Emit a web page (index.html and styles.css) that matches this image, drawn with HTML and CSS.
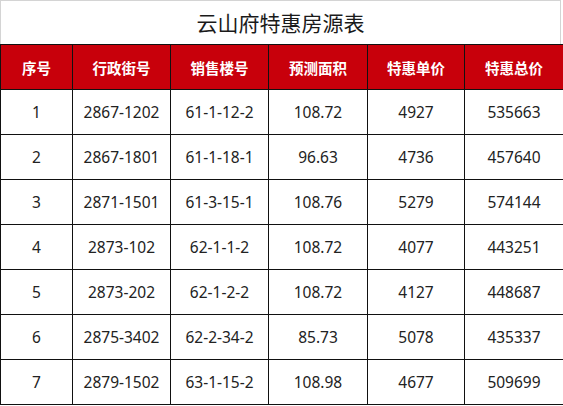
FILE: index.html
```html
<!DOCTYPE html>
<html lang="zh-CN">
<head>
<meta charset="utf-8">
<link rel="stylesheet" href="styles.css">
</head>
<body>
<div class="sheet">
  <div class="title">云山府特惠房源表</div>
  <table class="grid">
    <colgroup>
      <col class="c1"><col class="c2"><col class="c3"><col class="c4"><col class="c5"><col class="c6">
    </colgroup>
    <thead>
      <tr><th>序号</th><th>行政街号</th><th>销售楼号</th><th>预测面积</th><th>特惠单价</th><th>特惠总价</th></tr>
    </thead>
    <tbody>
      <tr><td>1</td><td>2867-1202</td><td>61-1-12-2</td><td>108.72</td><td>4927</td><td>535663</td></tr>
      <tr><td>2</td><td>2867-1801</td><td>61-1-18-1</td><td>96.63</td><td>4736</td><td>457640</td></tr>
      <tr><td>3</td><td>2871-1501</td><td>61-3-15-1</td><td>108.76</td><td>5279</td><td>574144</td></tr>
      <tr><td>4</td><td>2873-102</td><td>62-1-1-2</td><td>108.72</td><td>4077</td><td>443251</td></tr>
      <tr><td>5</td><td>2873-202</td><td>62-1-2-2</td><td>108.72</td><td>4127</td><td>448687</td></tr>
      <tr><td>6</td><td>2875-3402</td><td>62-2-34-2</td><td>85.73</td><td>5078</td><td>435337</td></tr>
      <tr><td>7</td><td>2879-1502</td><td>63-1-15-2</td><td>108.98</td><td>4677</td><td>509699</td></tr>
    </tbody>
  </table>
</div>
</body>
</html>
```
FILE: styles.css
```css
html, body {
  margin: 0;
  padding: 0;
  background: #fff;
}
.sheet {
  width: 563px;
  font-family: "Noto Sans", "Noto Sans CJK SC", sans-serif;
}
.title {
  box-sizing: border-box;
  height: 44px;
  width: 561px;
  border-top: 1px solid #d4d4d4;
  border-left: 1px solid #d4d4d4;
  border-right: 1px solid #d4d4d4;
  display: flex;
  align-items: center;
  justify-content: center;
  font-family: "Noto Sans CJK SC", sans-serif;
  font-size: 21px;
  font-weight: 400;
  color: #1a1a1a;
  padding-bottom: 2px;
}
.grid {
  width: 563px;
  table-layout: fixed;
  border-collapse: collapse;
}
.c1 { width: 72px; }
.c2 { width: 98px; }
.c3 { width: 98px; }
.c4 { width: 99px; }
.c5 { width: 97px; }
.c6 { width: 99px; }
.grid th, .grid td {
  border: 1px solid #111;
  padding: 0;
  text-align: center;
  vertical-align: middle;
}
.grid th {
  height: 44px;
  background: #c8000b;
  color: #fff;
  font-family: "Noto Sans CJK SC", sans-serif;
  font-size: 14.5px;
  font-weight: 700;
}
.grid td {
  height: 44px;
  color: #222;
  font-size: 15.5px;
  font-weight: 400;
}
```
